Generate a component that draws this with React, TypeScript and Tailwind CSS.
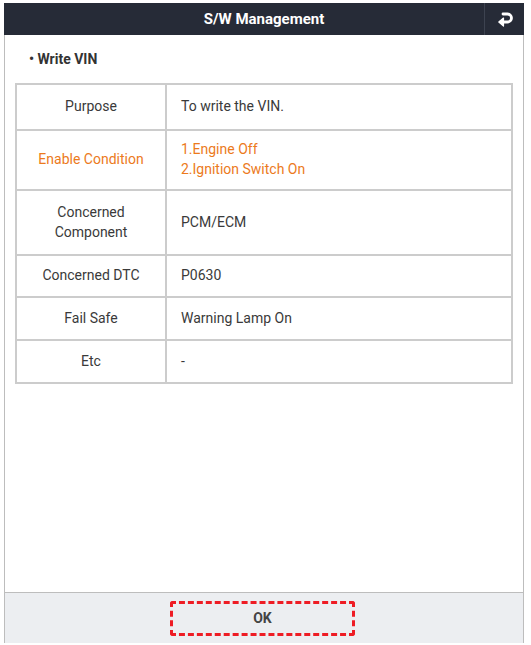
const rows: { label: string[]; value: string[]; accent?: boolean; h: string }[] = [
  { label: ["Purpose"], value: ["To write the VIN."], h: "h-[46px]" },
  { label: ["Enable Condition"], value: ["1.Engine Off", "2.Ignition Switch On"], accent: true, h: "h-[60px]" },
  { label: ["Concerned", "Component"], value: ["PCM/ECM"], h: "h-[65px]" },
  { label: ["Concerned DTC"], value: ["P0630"], h: "h-[42px]" },
  { label: ["Fail Safe"], value: ["Warning Lamp On"], h: "h-[43px]" },
  { label: ["Etc"], value: ["-"], h: "h-[43px]" },
];

const BackIcon = () => (
  <svg width="18" height="16" viewBox="0 0 18 16" fill="none">
    <path d="M7 3 H11.5 A4 4 0 0 1 11.5 11 H5" stroke="white" strokeWidth="2.8" strokeLinecap="round" />
    <path d="M7.5 7 L2.8 11 L7.5 15 Z" fill="white" stroke="white" strokeWidth="1.2" strokeLinejoin="round" />
  </svg>
);

export default function App() {
  return (
    <div className="w-[531px] h-[645px] bg-white pt-[3px] pl-[4px] font-['Roboto','Liberation_Sans',sans-serif]">
      <div className="w-[520px] h-[640px] flex flex-col">
        {/* ヘッダー */}
        <div className="h-[32px] bg-[#262b37] flex items-center shrink-0">
          <div className="flex-1 text-center text-white font-bold text-[15px] pl-[40px]">S/W Management</div>
          <div className="w-[40px] h-full border-l border-[#3d4350] flex items-center justify-center">
            <BackIcon />
          </div>
        </div>

        {/* 本文 */}
        <div className="flex-1 border-x border-[#bdbdbd] pt-[14px] pl-[10px]">
          <div className="text-[14px] font-bold text-[#333] pl-[14px] leading-[20px]">• Write VIN</div>
          <table className="mt-[14px] w-[498px] border-collapse border-2 border-[#cccccc] text-[14px] text-[#3a3a3a]">
            <tbody>
              {rows.map((r) => (
                <tr key={r.label.join(" ")} className={r.h}>
                  <td
                    className={`w-[150px] border-2 border-[#cccccc] text-center leading-[20px] pb-[2px] ${r.accent ? "text-[#ec7a1c]" : ""}`}
                  >
                    {r.label.map((l) => (
                      <div key={l}>{l}</div>
                    ))}
                  </td>
                  <td className={`border-2 border-[#cccccc] pl-[14px] leading-[20px] pb-[2px] ${r.accent ? "text-[#ec7a1c]" : ""}`}>
                    {r.value.map((v) => (
                      <div key={v}>{v}</div>
                    ))}
                  </td>
                </tr>
              ))}
            </tbody>
          </table>
        </div>

        {/* フッター */}
        <div className="h-[51px] shrink-0 bg-[#eceef1] border-x border-t border-[#bdbdbd] flex items-center justify-center">
          <button
            type="button"
            className="w-[185px] h-[35px] border-[3px] border-dashed border-[#ee1c24] rounded-[3px] text-[14px] font-bold text-[#444] -ml-[3px]"
          >
            OK
          </button>
        </div>
      </div>
    </div>
  );
}
